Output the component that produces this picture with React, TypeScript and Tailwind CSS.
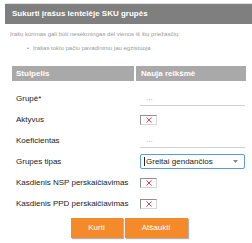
import React from 'react';

const CheckX = () => (
  <div className="w-[17px] h-[10px] border border-[#8f8f8f] border-r-[#d6d6d6] border-b-[#d6d6d6] bg-white flex items-center justify-center">
    <svg width="6" height="6" viewBox="0 0 6 6">
      <path d="M0.5 0.5 L5.5 5.5 M5.5 0.5 L0.5 5.5" stroke="#f0424a" strokeWidth="1" />
    </svg>
  </div>
);

const TextInput = () => (
  <div className="w-[105px] h-[15px] border-b border-[#cfcfcf] flex items-center pl-[6px] text-[8px] text-[#a8a6c6] leading-none">
    ...
  </div>
);

const rows: { label: string; field: 'text' | 'check' | 'select' }[] = [
  { label: 'Grupė*', field: 'text' },
  { label: 'Aktyvus', field: 'check' },
  { label: 'Koeficientas', field: 'text' },
  { label: 'Grupes tipas', field: 'select' },
  { label: 'Kasdienis NSP perskaičiavimas', field: 'check' },
  { label: 'Kasdienis PPD perskaičiavimas', field: 'check' },
];

const App = () => {
  return (
    <div className="w-[252px] h-[243px] bg-white overflow-hidden pt-[3px] font-['Liberation_Sans',Arial,sans-serif]">
      <div className="ml-[5px] border-t border-[#e2e2e2]">
        <div className="h-[20px] bg-[#7f7f7f] flex items-center px-[7px] text-white font-bold text-[8px]">
          Sukurti įrašus lentelėje SKU grupės
        </div>
      </div>

      <p className="mt-[6px] pl-[10px] text-[6px] leading-[8px] text-[#9a9a9a]">
        Įrašų kūrimas gali būti nesėkmingas dėl vienos iš šių priežasčių:
      </p>
      <ul className="mt-[6px] pl-[27px] text-[6px] leading-[8px] text-[#9a9a9a]">
        <li className="flex gap-[4px]">
          <span>•</span>
          <span>Įrašas tokiu pačiu pavadinimu jau egzistuoja</span>
        </li>
      </ul>

      <div className="ml-[12px] w-[234px] mt-[14px]">
        <div className="grid grid-cols-[122px_110px] gap-x-[2px] h-[15px] text-white font-bold text-[8px]">
          <div className="bg-[#a9a9a9] flex items-center pl-[4px]">Stulpelis</div>
          <div className="bg-[#a9a9a9] flex items-center pl-[5px]">Nauja reikšmė</div>
        </div>

        <div className="mt-[7px]">
          {rows.map((row) => (
            <div key={row.label} className="grid grid-cols-[122px_110px] gap-x-[2px] h-[21px] items-center text-[8px] text-[#222]">
              <div className="pl-[4px] whitespace-nowrap">{row.label}</div>
              <div className="pl-[4px]">
                {row.field === 'text' && <TextInput />}
                {row.field === 'check' && <CheckX />}
                {row.field === 'select' && (
                  <div className="w-[105px] h-[15px] border border-[#5a9ae6] rounded-[2px] flex items-center justify-between pl-[3px] pr-[6px]">
                    <span className="flex items-center">
                      <span className="w-px h-[9px] bg-[#222]" />
                      <span className="ml-px">Greitai gendančios</span>
                    </span>
                    <svg width="5" height="3" viewBox="0 0 5 3">
                      <path d="M0 0 L5 0 L2.5 3 Z" fill="#888" />
                    </svg>
                  </div>
                )}
              </div>
            </div>
          ))}
        </div>

        <div className="mt-[4px] flex justify-center gap-[2px] text-white text-[8px]">
          <button className="w-[52px] h-[20px] bg-[#f58a2b] shadow-[1px_1px_1px_rgba(0,0,0,0.3)]">Kurti</button>
          <button className="w-[63px] h-[20px] bg-[#f58a2b] shadow-[1px_1px_1px_rgba(0,0,0,0.3)]">Atšaukti</button>
        </div>
      </div>
    </div>
  );
};

export default App;
